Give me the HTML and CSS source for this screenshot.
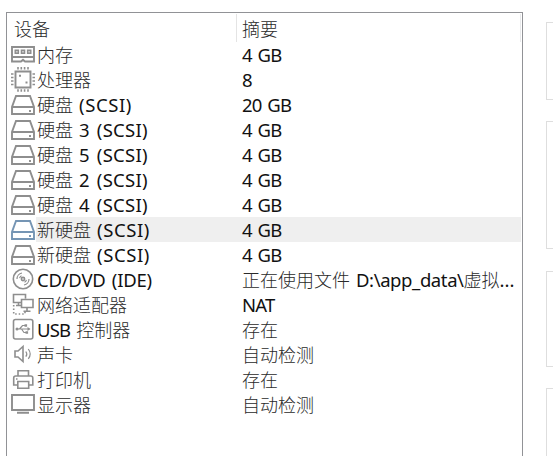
FILE: index.html
```
<!DOCTYPE html>
<html lang="zh-CN">
<head>
<meta charset="utf-8">
<title>设备</title>
<link rel="stylesheet" href="styles.css">
</head>
<body>
<svg class="defs" width="0" height="0">
  <symbol id="disk" viewBox="0 0 24 25"><path d="M5 4H19L23 15V22H1V15ZM1 15H23"/><path d="M19 18v2"/></symbol>
</svg>
<div class="screen">
<main class="panel">
  <div class="head"><div class="h1">设备</div><div class="h2">摘要</div></div>
  <div class="row"><svg class="icon" viewBox="0 0 24 25"><path d="M1 5H23V19.5H14L12 17.8L10 19.5H1ZM1 15H23"/><path class="soft" d="M4.2 8.3h3.2v3H4.2ZM10.4 8.3h3.2v3h-3.2ZM16.6 8.3h3.2v3h-3.2Z"/></svg><div class="name">内存</div><div class="value"><span class="la">4 GB</span></div></div>
  <div class="row"><svg class="icon" viewBox="0 0 24 25"><path d="M4.5 4.5H19.5V20.5H4.5Z"/><path class="thin" d="M7 0v2.5M10.3 0v2.5M13.6 0v2.5M17 0v2.5M7 22.3v2.5M10.3 22.3v2.5M13.6 22.3v2.5M17 22.3v2.5M0 7h2.5M0 10.5h2.5M0 14h2.5M0 17.5h2.5M21.5 7h2.5M21.5 10.5h2.5M21.5 14h2.5M21.5 17.5h2.5"/><path d="M8 8.7h2M14.5 15.5h2"/></svg><div class="name">处理器</div><div class="value"><span class="la">8</span></div></div>
  <div class="row"><svg class="icon"><use href="#disk"/></svg><div class="name">硬盘<span class="la tail wide">(SCSI)</span></div><div class="value"><span class="la">20 GB</span></div></div>
  <div class="row"><svg class="icon"><use href="#disk"/></svg><div class="name">硬盘<span class="la tail mid">3 (SCSI)</span></div><div class="value"><span class="la">4 GB</span></div></div>
  <div class="row"><svg class="icon"><use href="#disk"/></svg><div class="name">硬盘<span class="la tail mid">5 (SCSI)</span></div><div class="value"><span class="la">4 GB</span></div></div>
  <div class="row"><svg class="icon"><use href="#disk"/></svg><div class="name">硬盘<span class="la tail mid">2 (SCSI)</span></div><div class="value"><span class="la">4 GB</span></div></div>
  <div class="row"><svg class="icon"><use href="#disk"/></svg><div class="name">硬盘<span class="la tail mid">4 (SCSI)</span></div><div class="value"><span class="la">4 GB</span></div></div>
  <div class="row selected"><svg class="icon"><use href="#disk"/></svg><div class="name">新硬盘<span class="la tail wide">(SCSI)</span></div><div class="value"><span class="la">4 GB</span></div></div>
  <div class="row"><svg class="icon"><use href="#disk"/></svg><div class="name">新硬盘<span class="la tail wide">(SCSI)</span></div><div class="value"><span class="la">4 GB</span></div></div>
  <div class="row"><svg class="icon" viewBox="0 0 24 25"><circle class="thin" cx="12" cy="12" r="9.7"/><circle class="thin" cx="12" cy="12" r="1.6"/><path class="fine" d="M6 12A6 6 0 0 1 11 6M8.6 11.2A3.5 3.5 0 0 1 10.5 8.8M18 12A6 6 0 0 1 13 18M15.4 12.8A3.5 3.5 0 0 1 13.5 15.2"/></svg><div class="name"><span class="la disc">CD/DVD (IDE)</span></div><div class="value">正在使用文件<span class="la tail path">D:\app_data\</span>虚拟<span class="la dots">...</span></div></div>
  <div class="row"><svg class="icon" viewBox="0 0 24 25"><path class="thin" d="M10.5 10.5H2.5V2.5H14.5V6.5M5 13.5h5M7.5 10.5v3M10.5 7.5H22V15.5H10.5ZM16 15.5v3.5M12.5 19.2h7"/><path class="thin" stroke-dasharray="1.5 2" d="M2.7 13V22H14V20"/></svg><div class="name">网络适配器</div><div class="value"><span class="la">NAT</span></div></div>
  <div class="row"><svg class="icon" viewBox="0 0 24 25"><rect class="thin" x="2.5" y="2.5" width="19.3" height="19.5" rx="2"/><path class="fine" d="M5.5 12H18.5M8.5 12L11.5 8.5H14M10.5 12L13 15.5H15.5"/><path class="solid" d="M16.5 10L19.5 12L16.5 14ZM13.5 7.2h2.6v2.6h-2.6ZM14.5 14.2h2.6v2.6h-2.6Z"/><circle class="solid" cx="6" cy="12" r="1.5"/></svg><div class="name"><span class="la">USB</span><span class="after">控制器</span></div><div class="value">存在</div></div>
  <div class="row"><svg class="icon" viewBox="0 0 24 25"><path class="thin" d="M4 9H7L12 4.5V19.5L7 15H4Z"/><path class="fine" d="M14.8 9.5q2 2.5 0 5.2M17.3 7q3.8 5 0 9.8"/></svg><div class="name">声卡</div><div class="value">自动检测</div></div>
  <div class="row"><svg class="icon" viewBox="0 0 24 25"><path class="thin" d="M7 9V3.8H17.5V9M6.5 18H2.7V11Q2.7 9 4.7 9H19.7Q21.8 9 21.8 11V18H18M6.8 14.5H17.7V21.3H6.8Z"/><path class="thin" d="M5 12h1.5"/></svg><div class="name">打印机</div><div class="value">存在</div></div>
  <div class="row"><svg class="icon" viewBox="0 0 24 25"><path d="M1 3H23V18H1ZM6 20.8H18"/></svg><div class="name">显示器</div><div class="value">自动检测</div></div>
</main>
<aside class="groups"><div class="group g1"></div><div class="group g2"></div><div class="group g3"></div><div class="group g4"></div></aside>
</div>
</body>
</html>
```

FILE: styles.css
```
* { box-sizing: border-box; }
body { margin: 0; background: #fff; overflow: hidden; }
.defs { display: block; }
.screen { display: flex; height: 456px; padding-left: 6px; }
.panel {
  width: 517px;
  height: 444px;
  margin-top: 12px;
  border: 1px solid #919296;
  border-bottom: 0;
  font: 300 18px/25px "Noto Sans CJK SC", sans-serif;
  color: #2a2a2a;
  white-space: nowrap;
}
.head { display: flex; height: 29px; padding: 1px 1px 0 7px; line-height: 29px; }
.h1 { width: 223px; border-right: 1px solid #e4e4e4; }
.h2 { flex: 1; padding-left: 5px; border-right: 1px solid #e8e9eb; }
.row { display: flex; height: 25px; padding: 0 1px 0 4px; }
.icon {
  flex: none;
  width: 24px;
  height: 25px;
  margin-right: 1px;
  fill: none;
  stroke: #8e8e8e;
  stroke-width: 1.9;
}
.thin { stroke-width: 1.6; }
.fine { stroke-width: 1.2; }
.soft { stroke-width: 1.4; fill: #ccc; }
.solid { fill: #8e8e8e; stroke: none; }
.name { width: 206px; padding-left: 1px; }
.value { flex: 1; }
.la {
  font-family: "Noto Sans", sans-serif;
  font-weight: 400;
  font-size: 18.5px;
  line-height: 20px;
  letter-spacing: -0.8px;
  word-spacing: 1.8px;
  color: #111;
}
.wide { letter-spacing: 0.6px; }
.mid { letter-spacing: 0.3px; }
.disc { letter-spacing: -0.25px; }
.path { letter-spacing: -0.4px; }
.dots { letter-spacing: 0; }
.tail { margin-left: 6px; }
.after { margin-left: 6px; }
.selected .name, .selected .value { background: #efefef; }
.selected .icon { stroke: #7595b4; }
.groups { width: 7px; margin-left: 23px; padding-top: 22px; }
.group { width: 9px; border: 1px solid #dedede; border-right: 0; }
.g1 { height: 78px; }
.g2 { height: 128px; margin-top: 21px; }
.g3 { height: 96px; margin-top: 22px; }
.g4 { height: 80px; margin-top: 21px; }
```
